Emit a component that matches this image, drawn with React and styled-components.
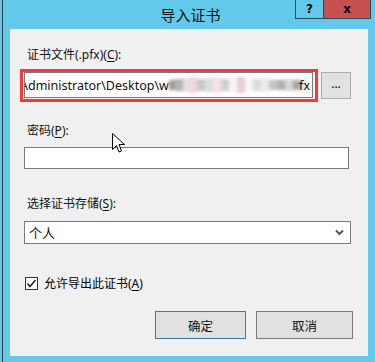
import React from 'react'
import styled, { createGlobalStyle } from 'styled-components'

const Global = createGlobalStyle`
  html, body { margin: 0; padding: 0; }
  body {
    width: 375px;
    height: 362px;
    overflow: hidden;
    background: #63c9ea;
    font-family: "Noto Sans", "Noto Sans CJK SC", sans-serif;
    font-size: 12px;
    color: #000;
  }
`

const Frame = styled.div`
  position: relative;
  width: 372px;
  height: 362px;
  margin-left: 2px;
  border-left: 1px solid #3b3b3b;
  background: #63c9ea;
  display: flex;
  flex-direction: column;
`

const TitleBar = styled.div`
  height: 29px;
  display: flex;
  position: relative;
`

const Title = styled.div`
  position: absolute;
  left: 0;
  right: 0;
  top: 4px;
  text-align: center;
  font-size: 15px;
  color: #111;
  font-family: "Noto Sans CJK SC", sans-serif;
  padding-left: 3px;
`

const Controls = styled.div`
  position: absolute;
  top: 0;
  left: 292px;
  display: flex;
`

const CtrlButton = styled.div`
  height: 19px;
  width: ${p => p.$w}px;
  box-sizing: border-box;
  background: ${p => p.$bg};
  border: 1px solid #2c4a58;
  border-top: none;
  ${p => p.$joined && 'border-left: none;'}
  display: flex;
  align-items: center;
  justify-content: center;
  font-family: "DejaVu Sans", sans-serif;
  font-weight: bold;
  font-size: 12px;
  color: #000;
  line-height: 1;
`

const Content = styled.div`
  margin-left: 7px;
  width: 358px;
  height: 327px;
  background: #f0f0f0;
  box-sizing: border-box;
  padding-top: 18px;
  display: flex;
  flex-direction: column;
`

const Label = styled.div`
  margin-left: 17px;
  height: 16px;
  line-height: 16px;
  margin-top: ${p => p.$mt || 0}px;
  white-space: nowrap;
  color: #111;
  u { text-decoration: underline; text-underline-offset: 2px; }
`

const FileRow = styled.div`
  display: flex;
  align-items: flex-start;
  margin-top: 6px;
  margin-left: 10px;
`

const Highlight = styled.div`
  width: 298px;
  height: 33px;
  box-sizing: border-box;
  border: 3px solid #f23a3c;
  padding: 0 2px 1px 1px;
`

const TextBox = styled.div`
  box-sizing: border-box;
  height: ${p => p.$h}px;
  width: ${p => p.$w}px;
  margin-left: ${p => p.$ml || 0}px;
  margin-top: ${p => p.$mt || 0}px;
  background: #fff;
  border: 1px solid #7a7a7a;
  display: flex;
  align-items: center;
  overflow: hidden;
  white-space: nowrap;
  position: relative;
`

const PathText = styled.span`
  margin-left: -5px;
  font-size: 12.5px;
  color: #111;
`

const Smudge = styled.div`
  display: flex;
  align-items: center;
  height: 18px;
  margin-left: 0;
  filter: blur(1.6px);
`

const Cell = styled.div`
  width: ${p => p.$w}px;
  height: ${p => p.$h}px;
  background: ${p => p.$c};
`

const Fx = styled.span`
  position: absolute;
  right: 2px;
  font-size: 12.5px;
  color: #111;
`

const BrowseButton = styled.div`
  margin-left: 3px;
  margin-top: 3px;
  width: 30px;
  height: 27px;
  box-sizing: border-box;
  background: #e1e1e1;
  border: 1px solid #adadad;
  display: flex;
  align-items: center;
  justify-content: center;
  font-size: 12px;
  padding-bottom: 4px;
`

const SelectBox = styled(TextBox)`
  justify-content: space-between;
  padding: 0 6px 0 4px;
`

const SelectText = styled.span`
  font-family: "Noto Sans CJK SC", sans-serif;
  font-size: 13px;
  color: #111;
`

const CheckRow = styled.div`
  display: flex;
  align-items: center;
  margin-left: 15px;
  margin-top: 31px;
  height: 16px;
  gap: 6px;
  u { text-decoration: underline; text-underline-offset: 2px; }
`

const CheckBox = styled.div`
  width: 13px;
  height: 13px;
  box-sizing: border-box;
  border: 1px solid #333;
  background: #fff;
  display: flex;
  align-items: center;
  justify-content: center;
`

const ButtonRow = styled.div`
  display: flex;
  gap: 10px;
  margin-left: 145px;
  margin-top: 20px;
`

const DialogButton = styled.div`
  width: ${p => p.$w}px;
  height: 28px;
  box-sizing: border-box;
  background: #e1e1e1;
  border: 1px solid ${p => (p.$primary ? '#3d7bad' : '#7a7a7a')};
  display: flex;
  align-items: center;
  justify-content: center;
  font-family: "Noto Sans CJK SC", sans-serif;
  font-size: 12.5px;
  color: #111;
`

const Cursor = styled.svg`
  position: absolute;
  left: 109px;
  top: 133px;
`

// pixelated blur over the hidden part of the path
const smudge = [
  ['#9c9c9c', 6, 10], ['#b4b4b4', 8, 12], ['#e2e2e2', 6, 14], ['#f0d8dc', 8, 16],
  ['#c9c9c9', 8, 12], ['#dedede', 8, 14], ['#f3e3e5', 8, 16], ['#d0d0d0', 8, 12],
  ['#f5f5f5', 8, 14], ['#e6d0d4', 8, 16], ['#f4f4f4', 8, 12], ['#dcdcdc', 8, 12],
  ['#ececec', 8, 14], ['#c4c4c4', 8, 10], ['#b0b0b0', 8, 10], ['#d6d6d6', 8, 12],
  ['#a8a8a8', 8, 10], ['#e8e8e8', 6, 12],
]

export default function App() {
  return (
    <>
      <Global />
      <Frame>
        <TitleBar>
          <Title>导入证书</Title>
          <Controls>
            <CtrlButton $w={29} $bg="#63c9ea">?</CtrlButton>
            <CtrlButton $w={47} $bg="#c75050" $joined>x</CtrlButton>
          </Controls>
        </TitleBar>
        <Content>
          <Label>证书文件(.pfx)(<u>C</u>):</Label>
          <FileRow>
            <Highlight>
              <TextBox $w={289} $h={26}>
                <PathText>Administrator\Desktop\w</PathText>
                <Smudge>
                  {smudge.map(([c, w, h], i) => <Cell key={i} $c={c} $w={w} $h={h} />)}
                </Smudge>
                <Fx>fx</Fx>
              </TextBox>
            </Highlight>
            <BrowseButton>...</BrowseButton>
          </FileRow>
          <Label $mt={21}>密码(<u>P</u>):</Label>
          <TextBox $w={325} $h={22} $ml={14} $mt={8} />
          <Label $mt={27}>选择证书存储(<u>S</u>):</Label>
          <SelectBox $w={327} $h={23} $ml={14} $mt={9}>
            <SelectText>个人</SelectText>
            <svg width="9" height="7" viewBox="0 0 9 7">
              <polyline points="1,1.5 4.5,5 8,1.5" fill="none" stroke="#555" strokeWidth="2" />
            </svg>
          </SelectBox>
          <CheckRow>
            <CheckBox>
              <svg width="11" height="11" viewBox="0 0 11 11">
                <polyline points="1.5,5.5 4,8.5 9.5,2" fill="none" stroke="#222" strokeWidth="1.6" />
              </svg>
            </CheckBox>
            <span>允许导出此证书(<u>A</u>)</span>
          </CheckRow>
          <ButtonRow>
            <DialogButton $w={91} $primary>确定</DialogButton>
            <DialogButton $w={97}>取消</DialogButton>
          </ButtonRow>
        </Content>
        <Cursor width="13" height="21" viewBox="0 0 13 21">
          <path d="M0.5,0.5 L0.5,16.5 L4.5,12.5 L7,19 L9.5,18 L7,11.5 L12.5,11.5 Z" fill="#fff" stroke="#000" strokeWidth="1" />
        </Cursor>
      </Frame>
    </>
  )
}
